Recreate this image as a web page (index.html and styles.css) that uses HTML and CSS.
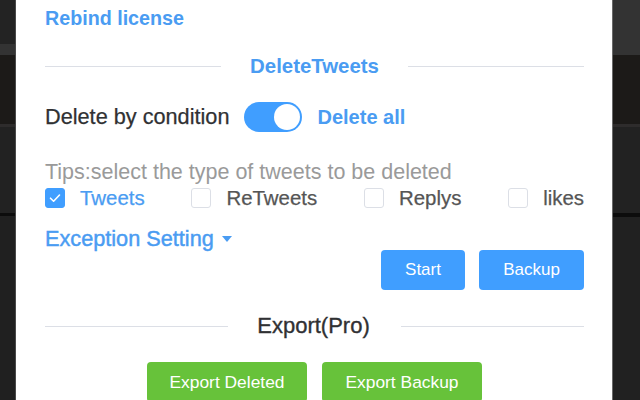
FILE: index.html
```html
<!DOCTYPE html>
<html>
<head>
<meta charset="utf-8">
<link rel="stylesheet" href="styles.css">
</head>
<body>
<div class="page">
  <div class="strip strip-left"></div>
  <div class="panel">
    <div class="row rebind"><a class="link">Rebind license</a></div>
    <div class="divider blue-title"><span class="line"></span><span class="dtext">DeleteTweets</span><span class="line"></span></div>
    <div class="row mode">
      <span class="label">Delete by condition</span>
      <span class="switch"><span class="knob"></span></span>
      <span class="label active">Delete all</span>
    </div>
    <div class="tips">Tips:select the type of tweets to be deleted</div>
    <div class="checks">
      <label class="check on"><span class="box"><svg viewBox="0 0 20 20" width="20" height="20"><path d="M5.5 10.2 L8.6 13.2 L14.5 7" fill="none" stroke="#fff" stroke-width="1.6" stroke-linecap="round" stroke-linejoin="round"/></svg></span><span class="ctext">Tweets</span></label>
      <label class="check"><span class="box"></span><span class="ctext">ReTweets</span></label>
      <label class="check"><span class="box"></span><span class="ctext">Replys</span></label>
      <label class="check"><span class="box"></span><span class="ctext">likes</span></label>
    </div>
    <div class="row exception"><span class="link med">Exception Setting</span><span class="caret"></span></div>
    <div class="actions">
      <button class="btn blue start">Start</button>
      <button class="btn blue backup">Backup</button>
    </div>
    <div class="divider dark-title"><span class="line"></span><span class="dtext">Export(Pro)</span><span class="line"></span></div>
    <div class="exports">
      <button class="btn green">Export Deleted</button>
      <button class="btn green">Export Backup</button>
    </div>
  </div>
  <div class="strip strip-right"></div>
</div>
</body>
</html>
```
FILE: styles.css
```css
html, body {
  margin: 0;
  padding: 0;
  height: 400px;
  overflow: hidden;
  background: #202020;
}
.page {
  display: grid;
  grid-template-columns: 15px 598px 27px;
  height: 400px;
}
.strip-left {
  background: linear-gradient(to bottom,
    #232323 0, #232323 44px,
    #333333 44px, #333333 55px,
    #1c1a18 55px, #1c1a18 124px,
    #2e2c2c 124px, #2e2c2c 127px,
    #222222 127px, #222222 213px,
    #0c0c0c 213px, #0c0c0c 216px,
    #202020 216px);
}
.strip-right {
  background: linear-gradient(to bottom,
    #333333 0, #333333 55px,
    #1c1a18 55px, #1c1a18 124px,
    #2e2c2c 124px, #2e2c2c 127px,
    #222222 127px, #222222 213px,
    #0c0c0c 213px, #0c0c0c 217px,
    #212121 217px);
}
.panel {
  background: #fff;
  border-left: 1px solid #4a4a4a;
  border-right: 1px solid #6a6a6a;
  padding: 0 28px 0 29px;
  font-family: "Liberation Sans", Arial, sans-serif;
  color: #303133;
  overflow: hidden;
}
.row {
  display: flex;
  align-items: center;
}
.link {
  color: #4a9cf2;
  font-weight: bold;
  font-size: 19.7px;
}
.rebind {
  height: 37px;
}
.divider {
  display: flex;
  align-items: center;
  height: 24px;
  margin-top: 17px;
}
.divider .line {
  flex: 1;
  height: 1px;
  background: #dcdfe6;
}
.divider .dtext {
  padding: 0 29px;
  font-size: 20.4px;
  font-weight: bold;
}
.blue-title .dtext { color: #4a9cf2; }
.dark-title .dtext {
  color: #303133;
  font-weight: normal;
  font-size: 22px;
  padding: 0 31px 0 29px;
  -webkit-text-stroke: 0.35px #303133;
}
.mode {
  height: 32px;
  margin-top: 23px;
  gap: 15px;
  font-size: 21.7px;
}
.mode .label { color: #303133; -webkit-text-stroke: 0.25px #303133; }
.mode .label.active { color: #4a9cf2; font-weight: bold; font-size: 20px; -webkit-text-stroke: 0; }
.switch {
  width: 58px;
  height: 30px;
  border-radius: 15px;
  background: #409eff;
  display: flex;
  align-items: center;
  justify-content: flex-end;
  padding: 0 2px;
  box-sizing: border-box;
}
.knob {
  width: 26px;
  height: 26px;
  border-radius: 50%;
  background: #fff;
}
.tips {
  margin-top: 28px;
  height: 22px;
  line-height: 22px;
  color: #9a9a9a;
  font-size: 21.5px;
  white-space: nowrap;
}
.checks {
  display: flex;
  justify-content: space-between;
  align-items: center;
  height: 30px;
  margin-top: 0;
}
.check {
  display: flex;
  align-items: center;
  gap: 15px;
  font-size: 20.4px;
  color: #555;
  -webkit-text-stroke: 0.25px #555;
}
.box {
  width: 20px;
  height: 20px;
  box-sizing: border-box;
  border: 1px solid #dcdfe6;
  border-radius: 3px;
  background: #fff;
  display: block;
}
.box svg { display: block; margin: -1px; }
.check.on .box {
  background: #409eff;
  border-color: #409eff;
}
.check.on .ctext { color: #4a9cf2; -webkit-text-stroke: 0.25px #4a9cf2; }
.exception {
  height: 22px;
  margin-top: 15px;
  gap: 8px;
}
.exception .link { font-size: 21.7px; font-weight: normal; -webkit-text-stroke: 0.45px #4a9cf2; }
.caret {
  width: 0;
  height: 0;
  border-left: 5px solid transparent;
  border-right: 5px solid transparent;
  border-top: 6px solid #4a9cf2;
}
.actions {
  display: flex;
  justify-content: flex-end;
  gap: 14px;
  height: 40px;
}
.btn {
  border: none;
  border-radius: 4px;
  color: #fff;
  font-family: "Liberation Sans", Arial, sans-serif;
  font-size: 17px;
  height: 40px;
  padding: 0;
}
.blue { background: #409eff; }
.start { width: 84px; }
.backup { width: 105px; }
.dark-title {
  margin-top: 24px;
}
.exports {
  display: flex;
  justify-content: center;
  gap: 15px;
  margin-top: 24px;
}
.green {
  background: #67c23a;
  width: 160px;
  font-size: 17.4px;
}
```
